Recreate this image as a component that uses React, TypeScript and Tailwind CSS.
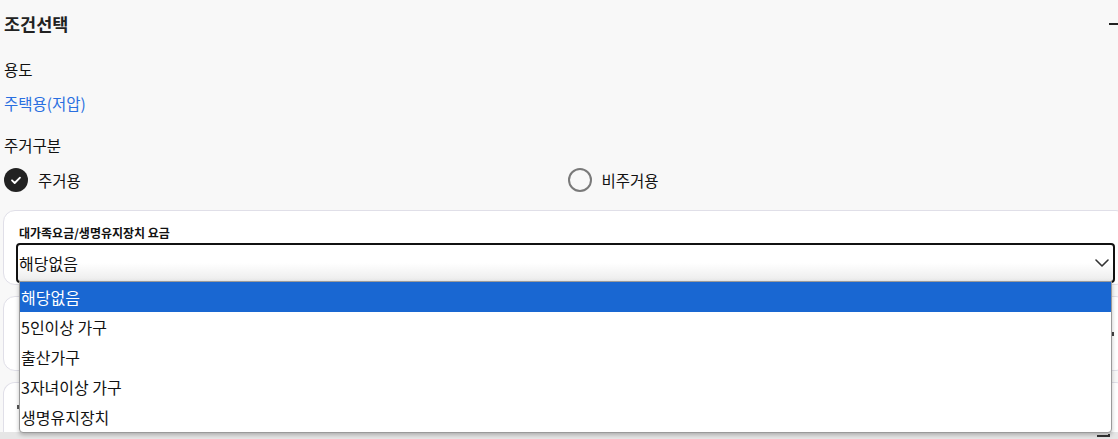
import React from "react";

const font = { fontFamily: '"Noto Sans CJK KR", "Noto Sans", sans-serif' };

function Chevron() {
  return (
    <svg width="14" height="8" viewBox="0 0 14 8" fill="none">
      <path d="M1 1l6 6 6-6" stroke="#333" strokeWidth="1.6" strokeLinecap="round" strokeLinejoin="round" />
    </svg>
  );
}

const options = ["해당없음", "5인이상 가구", "출산가구", "3자녀이상 가구", "생명유지장치"];

export default function App() {
  return (
    <div className="relative h-[439px] w-[1118px] overflow-hidden bg-[#f8f8f8]" style={font}>
      <div className="w-[1131px]">
        <div className="flex h-[48px] items-center justify-between pl-[4px] pr-[4px]">
          <span className="text-[17.5px] font-bold text-[#222]">조건선택</span>
          <span className="block h-[2px] w-[18px] bg-[#222]" />
        </div>
        <div className="mt-[9px] pl-[4px] text-[15.5px] leading-[24px] text-[#111]">용도</div>
        <div className="mt-[10px] pl-[4px] text-[15.5px] leading-[24px] text-[#2a6fe0]">주택용(저압)</div>
        <div className="mt-[18px] pl-[4px] text-[15.5px] leading-[24px] text-[#111]">주거구분</div>
        <div className="mt-[11px] grid grid-cols-2 pl-[4px]">
          <div className="flex items-center gap-[10px]">
            <span className="flex h-[24px] w-[24px] items-center justify-center rounded-full bg-[#222]">
              <svg width="14" height="14" viewBox="0 0 14 14" fill="none">
                <path d="M3 7.3l2.7 2.7L11 4.6" stroke="white" strokeWidth="1.8" strokeLinecap="round" strokeLinejoin="round" />
              </svg>
            </span>
            <span className="text-[15.5px] leading-[24px] text-[#111]">주거용</span>
          </div>
          <div className="flex items-center gap-[10px]">
            <span className="h-[24px] w-[24px] rounded-full border-2 border-[#7a7a7a]" />
            <span className="text-[15.5px] leading-[24px] text-[#111]">비주거용</span>
          </div>
        </div>

        <div className="mt-[18px] ml-[3px] h-[75px] w-[1125px] rounded-[12px] border border-[#e0dfe8] bg-white px-[12px] pt-[15px]">
          <div className="ml-[3px] text-[12px] leading-[14px] font-bold text-[#111]">대가족요금/생명유지장치 요금</div>
          <div className="mt-[3px] flex h-[40px] w-[1099px] items-center justify-between rounded-[4px] border-2 border-[#111] bg-gradient-to-b from-white via-white to-[#ececec] pl-[1px] pr-[4px]">
            <span className="text-[16px] text-[#111]">해당없음</span>
            <Chevron />
          </div>
        </div>

        <div className="mt-[11px] ml-[3px] flex h-[75px] w-[1125px] items-center rounded-[12px] border border-[#e0dfe8] bg-white pl-[1108px]">
          <span className="block h-[4px] w-[2px] bg-[#444]" />
        </div>

        <div className="mt-[11px] ml-[3px] h-[50px] w-[1125px] rounded-t-[12px] border border-b-0 border-[#e0dfe8] bg-white pl-[13px] pt-[22px]">
          <span className="block h-[4px] w-[2px] bg-[#555]" />
        </div>
        <div className="flex h-[10px] bg-[#e6e6e6] pl-[1097px] pt-[2px]">
          <span className="block h-[3px] w-[13px] border-b-2 border-r-2 border-[#333]" />
        </div>
      </div>

      <div className="absolute left-[19px] top-[281px] w-[1093px] overflow-hidden rounded-b-[4px] border border-[#9a9a9a] bg-white shadow-[0_2px_4px_rgba(0,0,0,0.25)]">
        {options.map((o, i) => (
          <div
            key={o}
            className={`flex h-[30px] items-center pl-[1px] text-[16px] ${i === 0 ? "bg-[#1967d2] text-white" : "text-[#111]"}`}
          >
            {o}
          </div>
        ))}
      </div>
    </div>
  );
}
